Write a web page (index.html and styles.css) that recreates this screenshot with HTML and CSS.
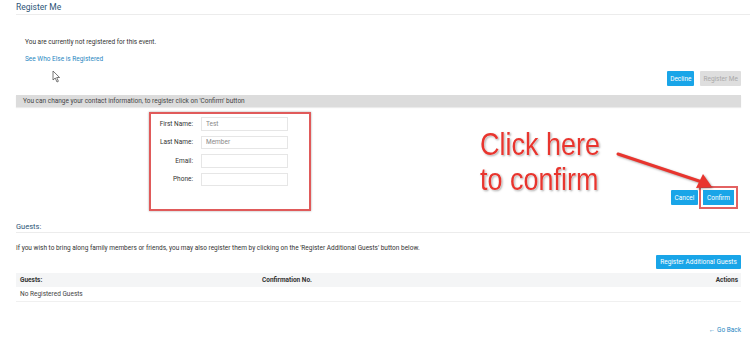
FILE: index.html
```html
<!DOCTYPE html>
<html lang="en">
<head>
  <meta charset="UTF-8">
  <meta name="viewport" content="width=device-width, initial-scale=1.0">
  <link rel="stylesheet" href="styles.css">
  <title>Register Me</title>
</head>
<body>
  <div class="page">
    <h2 class="section-title">Register Me</h2>

    <p class="status">You are currently not registered for this event.</p>
    <a class="link" href="#">See Who Else is Registered</a>

    <div class="actions">
      <button class="btn btn-blue">Decline</button>
      <button class="btn btn-disabled">Register Me</button>
    </div>

    <div class="info-bar">You can change your contact information, to register click on 'Confirm' button</div>

    <div class="form-row">
      <form class="contact-box">
        <div class="field">
          <label for="first">First Name:</label>
          <input type="text" id="first" value="Test">
        </div>
        <div class="field">
          <label for="last">Last Name:</label>
          <input type="text" id="last" value="Member">
        </div>
        <div class="field">
          <label for="email">Email:</label>
          <input type="text" id="email">
        </div>
        <div class="field">
          <label for="phone">Phone:</label>
          <input type="text" id="phone">
        </div>
      </form>

      <div class="form-buttons">
        <button class="btn btn-blue btn-cancel">Cancel</button>
        <button class="btn btn-blue btn-confirm">Confirm</button>
      </div>
    </div>

    <h3 class="section-title guests-title">Guests:</h3>
    <p class="guests-text">If you wish to bring along family members or friends, you may also register them by clicking on the 'Register Additional Guests' button below.</p>

    <div class="actions guests-actions">
      <button class="btn btn-blue btn-guests">Register Additional Guests</button>
    </div>

    <table class="guests-table">
      <thead>
        <tr>
          <th class="col-guest">Guests:</th>
          <th class="col-conf">Confirmation No.</th>
          <th class="col-actions">Actions</th>
        </tr>
      </thead>
      <tbody>
        <tr>
          <td colspan="3">No Registered Guests</td>
        </tr>
      </tbody>
    </table>

    <div class="go-back"><a class="link" href="#">&larr; Go Back</a></div>
  </div>

  <!-- annotation drawn over the screenshot -->
  <div class="callout">Click here<br>to confirm</div>
  <svg class="callout-arrow" width="110" height="45" viewBox="0 0 110 45">
    <line x1="2" y1="3" x2="86" y2="31" stroke="#e8352e" stroke-width="3" stroke-linecap="round"/>
    <polygon points="96,36 80,37 87,23" fill="#e8352e"/>
  </svg>

  <svg class="cursor" width="9" height="13" viewBox="0 0 9 13">
    <path d="M1 1 L1 10 L3.2 8 L5 12 L6.4 11.3 L4.7 7.5 L7.6 7.5 Z" fill="#fff" stroke="#555" stroke-width="0.8" stroke-linejoin="round"/>
  </svg>
</body>
</html>
```

FILE: styles.css
```css
body {
  margin: 0;
  padding: 0;
  background-color: #fff;
  font-family: Roboto, "Liberation Sans", Arial, sans-serif;
  font-size: 6.5px;
  color: #333;
}

.page {
  padding: 0 9px 0 16px;
}

.section-title {
  margin: 0;
  padding-top: 1px;
  height: 13px;
  line-height: 13px;
  font-size: 8.5px;
  font-weight: normal;
  color: #2d5577;
  border-bottom: 1px solid #ececec;
  margin-right: -9px;
}

.status {
  margin: 22px 0 0 9px;
  line-height: 10px;
}

.link {
  display: block;
  margin: 7px 0 0 9px;
  line-height: 10px;
  color: #2a88c2;
  text-decoration: none;
}

.actions {
  display: flex;
  justify-content: flex-end;
  gap: 6px;
  margin-top: 7px;
}

.btn {
  font-family: Roboto, "Liberation Sans", Arial, sans-serif;
  font-size: 6.5px;
  height: 15px;
  padding: 0 3px;
  border: none;
  border-radius: 1px;
  cursor: pointer;
}

.btn-blue {
  background-color: #19a5e8;
  color: #fff;
}

.btn-disabled {
  background-color: #dedede;
  color: #a9a9a9;
}

.info-bar {
  margin-top: 9px;
  height: 12px;
  line-height: 12px;
  padding-left: 7px;
  background-color: #dcdcdc;
  color: #444;
  box-shadow: 0 1px 1px rgba(0, 0, 0, 0.08);
}

.form-row {
  display: flex;
  align-items: flex-end;
  margin-top: 5px;
}

.contact-box {
  box-sizing: border-box;
  width: 162px;
  height: 99px;
  margin-left: 133px;
  padding: 3px 0 0 0;
  border: 2px solid #e05a5a;
  box-shadow: 0 0 2px rgba(0, 0, 0, 0.35);
  display: flex;
  flex-direction: column;
  gap: 5px;
}

.field {
  display: flex;
  align-items: center;
  height: 13.5px;
}

.field label {
  width: 42px;
  text-align: right;
  color: #333;
}

.field input {
  box-sizing: border-box;
  width: 87px;
  height: 13.5px;
  margin-left: 8px;
  padding: 0 4px;
  border: 1px solid #e6e6e6;
  font-family: Roboto, "Liberation Sans", Arial, sans-serif;
  font-size: 6.5px;
  color: #888;
}

.form-buttons {
  display: flex;
  gap: 5px;
  margin-left: auto;
  margin-right: 7px;
  margin-bottom: 6px;
}

.btn-cancel {
  width: 27px;
  padding: 0;
}

.btn-confirm {
  width: 31px;
  padding: 0;
  border-radius: 0;
  outline: 2px solid #e36262;
  outline-offset: 2px;
}

.guests-title {
  margin-top: 9px;
  height: 11px;
  line-height: 12px;
  font-size: 7.5px;
}

.guests-text {
  margin: 10px 0 0 0;
  line-height: 10px;
}

.guests-actions {
  margin-top: 2px;
}

.btn-guests {
  height: 14px;
  width: 85px;
  padding: 0;
}

.guests-table {
  width: 100%;
  margin-top: 4px;
  border-collapse: collapse;
}

.guests-table th {
  height: 14px;
  padding: 0 4px;
  background-color: #f4f5f6;
  text-align: left;
  font-weight: bold;
  color: #333;
}

.guests-table .col-guest {
  width: 234px;
}

.guests-table .col-actions {
  text-align: right;
  padding-right: 3px;
}

.guests-table td {
  height: 14px;
  padding: 0 4px;
  border-bottom: 1px solid #f0f0f0;
  color: #444;
}

.go-back {
  display: flex;
  justify-content: flex-end;
  margin-top: 23px;
}

.go-back .link {
  margin: 0;
}

.callout {
  position: absolute;
  left: 480px;
  top: 127px;
  font-family: "Liberation Sans", Arial, sans-serif;
  font-size: 27px;
  line-height: 31px;
  color: #e8352e;
  text-shadow: 0 0 1px #fff, 0 0 2px #fff, 1px 1px 2px rgba(0, 0, 0, 0.45);
  transform: scaleY(1.15);
  transform-origin: top left;
}

.callout-arrow {
  position: absolute;
  left: 616px;
  top: 151px;
  filter: drop-shadow(1px 1px 1px rgba(0, 0, 0, 0.35));
}

.cursor {
  position: absolute;
  left: 52px;
  top: 70px;
}
```
